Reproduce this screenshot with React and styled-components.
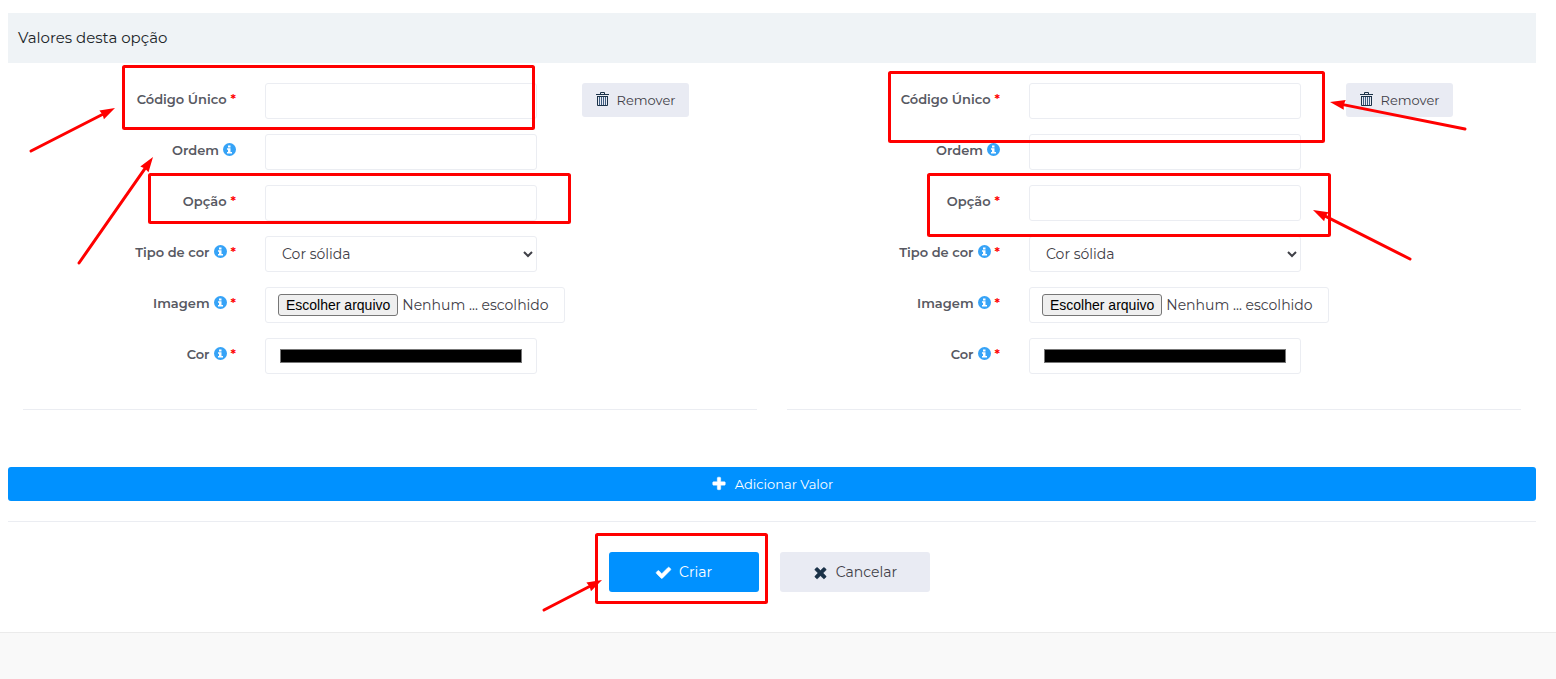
import { useRef } from "react"
import styled, { createGlobalStyle } from "styled-components"

const GlobalStyle = createGlobalStyle`
    * {
        box-sizing: border-box;
    }
    body {
        margin: 0;
        background-color: #f9f9f9;
        color: #3f4047;
        font-family: Montserrat, Inter, sans-serif;
        font-size: 14px;
        font-weight: 400;
    }
    button, input, select {
        font: inherit;
        color: inherit;
    }
`;

const Page = styled.div`
    position: relative;
`;
const Form = styled.form`
    padding: 13px 20px 40px 8px;
    background-color: white;
    border-bottom: 1px solid #ebebeb;
`;
const Title = styled.h3`
    margin: 0;
    padding: 0 10px;
    background-color: #eff3f6;
    color: #212529;
    font-size: 15px;
    font-weight: 400;
    line-height: 50px;
`;
const Columns = styled.div`
    display: grid;
    grid-template-columns: 1fr 1fr;
`;
const Value = styled.div`
    display: flex;
    flex-direction: column;
    gap: 15px;
    margin: 0 15px;
    padding: 20px 0 35px;
    border-bottom: 1px solid #ebedf2;
`;
const Row = styled.div`
    display: grid;
    grid-template-columns: minmax(0, 213fr) minmax(0, 272fr) minmax(0, 191fr);
    column-gap: 29px;
    height: 36px;
`;
const Label = styled.label`
    display: flex;
    align-items: center;
    justify-content: flex-end;
    gap: 4px;
    height: 32px;
    color: #575962;
    font-size: 13px;
    font-weight: 600;
    white-space: nowrap;
`;
const Required = styled.span`
    color: #ff0000;
`;
const Input = styled.input`
    width: 100%;
    height: 36px;
    padding: 6px 12px;
    border: 1px solid #ebedf2;
    border-radius: 3px;
    background-color: white;
`;
const Select = styled.select`
    width: 100%;
    height: 36px;
    padding: 0 0 0 12px;
    border: 1px solid #ebedf2;
    border-radius: 3px;
    background-color: white;
`;
const FileBox = styled.div`
    display: flex;
    align-items: center;
    gap: 4px;
    min-width: 300px;
    height: 36px;
    padding: 0 12px;
    border: 1px solid #ebedf2;
    border-radius: 3px;
    white-space: nowrap;
`;
const FileButton = styled.button`
    height: 22px;
    padding: 0 7px;
    border: 1px solid #767676;
    border-radius: 3px;
    background-color: #efefef;
    color: black;
    font-family: "Liberation Sans", Arial, sans-serif;
    font-size: 14px;
    line-height: 20px;
`;
const Button = styled.button`
    display: flex;
    align-items: center;
    justify-content: center;
    gap: 8px;
    width: ${(props) => props.$width};
    height: 34px;
    padding: 0;
    border: none;
    border-radius: 3px;
    background-color: ${(props) => (props.$primary ? "#0091ff" : "#e9ebf3")};
    color: ${(props) => (props.$primary ? "white" : "#3f4047")};
    font-size: 13px;
    cursor: pointer;
`;
const ActionButton = styled(Button)`
    gap: 7px;
    width: 150px;
    height: 40px;
    font-size: 14px;
`;
const RemoveCell = styled.div`
    padding-left: 16px;
`;
const AddBar = styled.div`
    padding: 57px 0 20px;
    border-bottom: 1px solid #ebedf2;
`;
const Actions = styled.div`
    display: flex;
    justify-content: center;
    gap: 21px;
    padding-top: 30px;
    padding-right: 6px;
`;
const Footer = styled.footer`
    height: 46px;
    background-color: #f9f9f9;
`;
const Marks = styled.svg`
    position: absolute;
    top: 0;
    left: 0;
    width: 100%;
    pointer-events: none;
`;

const ICONS = {
  plus: "M1600 736v192q0 40-28 68t-68 28h-416v416q0 40-28 68t-68 28h-192q-40 0-68-28t-28-68v-416h-416q-40 0-68-28t-28-68v-192q0-40 28-68t68-28h416v-416q0-40 28-68t68-28h192q40 0 68 28t28 68v416h416q40 0 68 28t28 68z",
  check: "M1671 566q0 40-28 68l-724 724-136 136q-28 28-68 28t-68-28l-136-136-362-362q-28-28-28-68t28-68l136-136q28-28 68-28t68 28l294 295 656-657q28-28 68-28t68 28l136 136q28 28 28 68z",
  times: "M1490 1322q0 40-28 68l-136 136q-28 28-68 28t-68-28l-294-294-294 294q-28 28-68 28t-68-28l-136-136q-28-28-28-68t28-68l294-294-294-294q-28-28-28-68t28-68l136-136q28-28 68-28t68 28l294 294 294-294q28-28 68-28t68 28l136 136q28 28 28 68t-28 68l-294 294 294 294q28 28 28 68z",
};

const Icon = ({ name, size = 16, color = "currentColor" }) => (
  <svg width={size} height={size} viewBox="0 0 1792 1792" fill={color} stroke={color} strokeWidth="50" aria-hidden="true">
    <path d={ICONS[name]} />
  </svg>
)

const Info = () => (
  <svg width="13" height="15" viewBox="0 0 13 15" aria-hidden="true">
    <circle cx="6.5" cy="6.5" r="6.5" fill="#36a3f7" />
    <path d="M5 2.5h2.5v2H5zM4 5.2h3.5V9H9v1.5H4V9h1V6.7H4z" fill="white" />
  </svg>
)

const Trash = () => (
  <svg width="13" height="16" viewBox="0 0 13 16" fill="none" aria-hidden="true">
    <path d="M4.5 2V.5h4V2M0 2.5h13" stroke="#1b3248" />
    <path d="M2 4.5h9M1.5 4v9.5h10V4" stroke="#1b3248" />
    <path d="M3.5 5v8M5.5 5v8M7.5 5v8M9.5 5v8" stroke="#3d5c80" />
  </svg>
)

const Field = ({ id, label, info, required, children, action }) => (
  <Row>
    <Label htmlFor={id}>
      {label}
      {info && <Info />}
      {required && <Required>*</Required>}
    </Label>
    <div>{children}</div>
    {action}
  </Row>
)

const FileInput = ({ id }) => {
  const input = useRef(null)
  return (
    <FileBox>
      <input ref={input} id={id} type="file" hidden />
      <FileButton type="button" onClick={() => input.current.click()}>Escolher arquivo</FileButton>
      <span>Nenhum ... escolhido</span>
    </FileBox>
  )
}

const OptionValue = ({ n }) => (
  <Value>
    <Field
      id={`codigo-${n}`}
      label="Código Único"
      required
      action={
        <RemoveCell>
          <Button type="button" $width="107px"><Trash />Remover</Button>
        </RemoveCell>
      }
    >
      <Input id={`codigo-${n}`} type="text" />
    </Field>
    <Field id={`ordem-${n}`} label="Ordem" info>
      <Input id={`ordem-${n}`} type="text" />
    </Field>
    <Field id={`opcao-${n}`} label="Opção" required>
      <Input id={`opcao-${n}`} type="text" />
    </Field>
    <Field id={`tipo-${n}`} label="Tipo de cor" info required>
      <Select id={`tipo-${n}`}>
        <option>Cor sólida</option>
      </Select>
    </Field>
    <Field id={`imagem-${n}`} label="Imagem" info required>
      <FileInput id={`imagem-${n}`} />
    </Field>
    <Field id={`cor-${n}`} label="Cor" info required>
      <Input id={`cor-${n}`} type="color" defaultValue="#000000" />
    </Field>
  </Value>
)

// left, top, right, bottom
const BOXES = [
  [122, 65, 535, 130],
  [148, 173, 571, 224],
  [888, 71, 1325, 143],
  [927, 173, 1331, 237],
  [595, 533, 768, 604],
];

// tail x, tail y, tip x, tip y
const ARROWS = [
  [31, 151, 115, 108],
  [79, 263, 153, 157],
  [1465, 129, 1330, 102],
  [1410, 259, 1313, 210],
  [544, 610, 602, 580],
];

const Arrow = ({ from, to }) => {
  const dx = to[0] - from[0]
  const dy = to[1] - from[1]
  const length = Math.hypot(dx, dy)
  const angle = (Math.atan2(dy, dx) * 180) / Math.PI
  return (
    <g transform={`translate(${to[0]} ${to[1]}) rotate(${angle})`}>
      <path d={`M${-length} 0H-12`} stroke="#ff0000" strokeWidth="3" strokeLinecap="round" />
      <path d="M0 0L-15 -5L-14 0L-15 5Z" fill="#ff0000" />
    </g>
  )
}

const App = () => {
  return (
    <Page>
      <GlobalStyle />
      <Form>
        <Title>Valores desta opção</Title>
        <Columns>
          <OptionValue n={1} />
          <OptionValue n={2} />
        </Columns>
        <AddBar>
          <Button type="button" $primary $width="100%"><Icon name="plus" />Adicionar Valor</Button>
        </AddBar>
        <Actions>
          <ActionButton type="submit" $primary><Icon name="check" size={17} />Criar</ActionButton>
          <ActionButton type="button"><Icon name="times" size={17} color="#1b3248" />Cancelar</ActionButton>
        </Actions>
      </Form>
      <Footer />
      <Marks viewBox="0 0 1556 679" aria-hidden="true">
        {BOXES.map(([l, t, r, b]) => (
          <rect key={`${l}-${t}`} x={l + 1.5} y={t + 1.5} width={r - l - 3} height={b - t - 3} rx="1" fill="none" stroke="#ff0000" strokeWidth="3" />
        ))}
        {ARROWS.map(([x1, y1, x2, y2]) => (
          <Arrow key={x1} from={[x1, y1]} to={[x2, y2]} />
        ))}
      </Marks>
    </Page>
  )
}

export default App
